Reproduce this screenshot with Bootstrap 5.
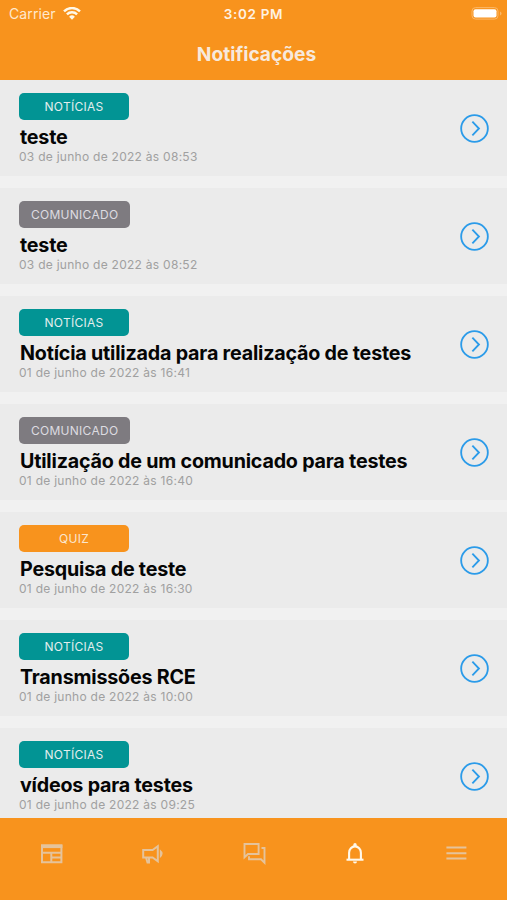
<!DOCTYPE html>
<html lang="pt-BR">
<head>
<meta charset="utf-8">
<meta name="viewport" content="width=device-width, initial-scale=1">
<title>Notificações</title>
<link href="https://cdn.jsdelivr.net/npm/bootstrap@5.3.0/dist/css/bootstrap.min.css" rel="stylesheet">
<style>
  body { font-family: Inter, "Liberation Sans", sans-serif; background: #f1f1f1; }
  .bg-brand { background: #f8931d; }
  .app-header { height: 80px; }
  .status-bar { height: 28px; font-size: 14px; line-height: 28px; color: #fff2e2; }
  .carrier { letter-spacing: .1px; color: #ffe8cd; padding-left: 9px; gap: 7px; }
  .clock { font-size: 13.5px; letter-spacing: .65px; }
  .screen-title { font-size: 19.2px; line-height: 52px; padding-left: 6px; color: #f7e9dc; }
  .feed { gap: 12px; }
  .notice { height: 96px; background: #ebebeb; padding: 12px 18px 0 19px; }
  .tag { height: 27px; min-width: 110px; padding: 0 12px; margin-top: .5px; line-height: 28px; border-radius: 5px; font-size: 12px; letter-spacing: .27px; color: #e3eeee; text-transform: uppercase; }
  .tag-news { background: #029494; }
  .tag-memo { background: #7e7b80; color: #dddce0; }
  .tag-quiz { background: #f8931d; color: #fbe6cd; }
  .notice-title { font-size: 19.7px; line-height: 24px; letter-spacing: -.2px; margin-top: 5px; padding: 0 0 1.5px 1px; color: #050505; }
  .notice-date { font-size: 12px; line-height: 14px; letter-spacing: .27px; color: #a0a0a0; }
  .go { width: 29px; height: 29px; margin-top: 21.5px; }
  .tab-bar { height: 82px; padding-top: 22px; }
  .tab-bar a { color: #e5c39b; }
  .tab-bar a.active { color: #fff8ea; }
</style>
</head>
<body>
<div class="d-flex flex-column vh-100 overflow-hidden">
  <header class="app-header bg-brand flex-shrink-0">
    <div class="status-bar row g-0 align-items-center">
      <div class="col">
        <div class="carrier d-flex align-items-center">
          <span>Carrier</span>
          <svg width="18" height="14" viewBox="0 0 18 14" fill="none" stroke="#fff8e8" stroke-width="2.4"><path d="M1 4.300a11.400 11.400 0 0 1 16 0M3.900 7.300a7.200 7.200 0 0 1 10.200 0"/><path d="M6.100 9.700a4.100 4.100 0 0 1 5.800 0L9 12.700z" fill="#fff8e8" stroke="none"/></svg>
        </div>
      </div>
      <div class="col-auto clock fw-semibold">3:02 PM</div>
      <div class="col">
        <div class="d-flex justify-content-end pe-1">
          <svg width="32" height="14" viewBox="0 0 32 14"><rect x="1" y=".6" width="26" height="11.500" rx="3.500" fill="none" stroke="#fbb868"/><rect x="2.500" y="2.200" width="23" height="8.400" rx="2" fill="#fff"/><path d="M29 4.400v4q1.500-.6 1.500-2T29 4.400" fill="#fbb868"/></svg>
        </div>
      </div>
    </div>
    <h1 class="screen-title fw-bold text-center m-0">Notificações</h1>
  </header>

  <main class="feed d-flex flex-column flex-grow-1 overflow-hidden">
    <article class="notice d-flex flex-shrink-0 justify-content-between">
      <div><div class="tag tag-news d-inline-block align-top text-center">Notícias</div><h2 class="notice-title fw-bold mb-0">teste</h2><div class="notice-date">03 de junho de 2022 às 08:53</div></div>
      <svg class="go" viewBox="0 0 30 30"><use href="#go"/></svg>
    </article>
    <article class="notice d-flex flex-shrink-0 justify-content-between">
      <div><div class="tag tag-memo d-inline-block align-top text-center">Comunicado</div><h2 class="notice-title fw-bold mb-0">teste</h2><div class="notice-date">03 de junho de 2022 às 08:52</div></div>
      <svg class="go" viewBox="0 0 30 30"><use href="#go"/></svg>
    </article>
    <article class="notice d-flex flex-shrink-0 justify-content-between">
      <div><div class="tag tag-news d-inline-block align-top text-center">Notícias</div><h2 class="notice-title fw-bold mb-0">Notícia utilizada para realização de testes</h2><div class="notice-date">01 de junho de 2022 às 16:41</div></div>
      <svg class="go" viewBox="0 0 30 30"><use href="#go"/></svg>
    </article>
    <article class="notice d-flex flex-shrink-0 justify-content-between">
      <div><div class="tag tag-memo d-inline-block align-top text-center">Comunicado</div><h2 class="notice-title fw-bold mb-0">Utilização de um comunicado para testes</h2><div class="notice-date">01 de junho de 2022 às 16:40</div></div>
      <svg class="go" viewBox="0 0 30 30"><use href="#go"/></svg>
    </article>
    <article class="notice d-flex flex-shrink-0 justify-content-between">
      <div><div class="tag tag-quiz d-inline-block align-top text-center">Quiz</div><h2 class="notice-title fw-bold mb-0">Pesquisa de teste</h2><div class="notice-date">01 de junho de 2022 às 16:30</div></div>
      <svg class="go" viewBox="0 0 30 30"><use href="#go"/></svg>
    </article>
    <article class="notice d-flex flex-shrink-0 justify-content-between">
      <div><div class="tag tag-news d-inline-block align-top text-center">Notícias</div><h2 class="notice-title fw-bold mb-0">Transmissões RCE</h2><div class="notice-date">01 de junho de 2022 às 10:00</div></div>
      <svg class="go" viewBox="0 0 30 30"><use href="#go"/></svg>
    </article>
    <article class="notice d-flex flex-shrink-0 justify-content-between">
      <div><div class="tag tag-news d-inline-block align-top text-center">Notícias</div><h2 class="notice-title fw-bold mb-0">vídeos para testes</h2><div class="notice-date">01 de junho de 2022 às 09:25</div></div>
      <svg class="go" viewBox="0 0 30 30"><use href="#go"/></svg>
    </article>
  </main>

  <nav class="tab-bar bg-brand flex-shrink-0 row g-0 text-center">
    <a class="col" href="#" aria-label="Notícias"><svg width="26" height="26" viewBox="0 0 26 26" fill="none" stroke="currentColor" stroke-width="2"><path d="M4 4.500h19.400v16.800H4z"/><path d="M3 5.300h21.400" stroke-width="3.600"/><path d="M4 11.800h19M13.300 12v9M13.500 16.500h9.500"/></svg></a>
    <a class="col" href="#" aria-label="Comunicados"><svg width="26" height="26" viewBox="0 0 26 26" fill="none" stroke="currentColor" stroke-width="2"><path d="M4.200 9h9.400l5.200-3.700v14.900l-5.200-3.700H4.200zM7 16.500l1.500 5h1.500v-5"/><path d="M20.800 8.300q5.600 4.500 0 9" fill="currentColor" stroke="none"/></svg></a>
    <a class="col" href="#" aria-label="Mensagens"><svg width="26" height="26" viewBox="0 0 26 26" fill="none" stroke="currentColor" stroke-width="1.900"><path d="M3.500 3h14.100v10H7l-3.500 3.300z"/><path d="M20.500 7h3v14.800L20 18.300H8v-3"/></svg></a>
    <a class="col active" href="#" aria-label="Notificações"><svg width="26" height="26" viewBox="0 0 26 26" fill="none" stroke="currentColor" stroke-width="2.100"><path d="M7.100 18.500v-6.800a5.900 6.300 0 0 1 11.800 0v6.800"/><path d="M4.500 18.700h17"/><path d="M11.300 5V3.800a1.700 1.700 0 0 1 3.400 0V5zM11 20.500h4a2 2 0 0 1-4 0z" fill="currentColor" stroke="none"/></svg></a>
    <a class="col" href="#" aria-label="Menu"><svg width="26" height="26" viewBox="0 0 26 26" fill="none" stroke="currentColor" stroke-width="2"><path d="M3.400 6.500h20M3.400 12.200h20M3.400 17.500h20"/></svg></a>
  </nav>
</div>
<svg class="d-none"><symbol id="go" viewBox="0 0 30 30"><circle cx="15" cy="15" r="13.800" fill="none" stroke="#2b9be9" stroke-width="1.900"/><path d="M12.800 8l6.800 7-6.800 7" fill="none" stroke="#2b9be9" stroke-width="1.900"/></symbol></svg>
<script src="https://cdn.jsdelivr.net/npm/bootstrap@5.3.0/dist/js/bootstrap.bundle.min.js"></script>
</body>
</html>
